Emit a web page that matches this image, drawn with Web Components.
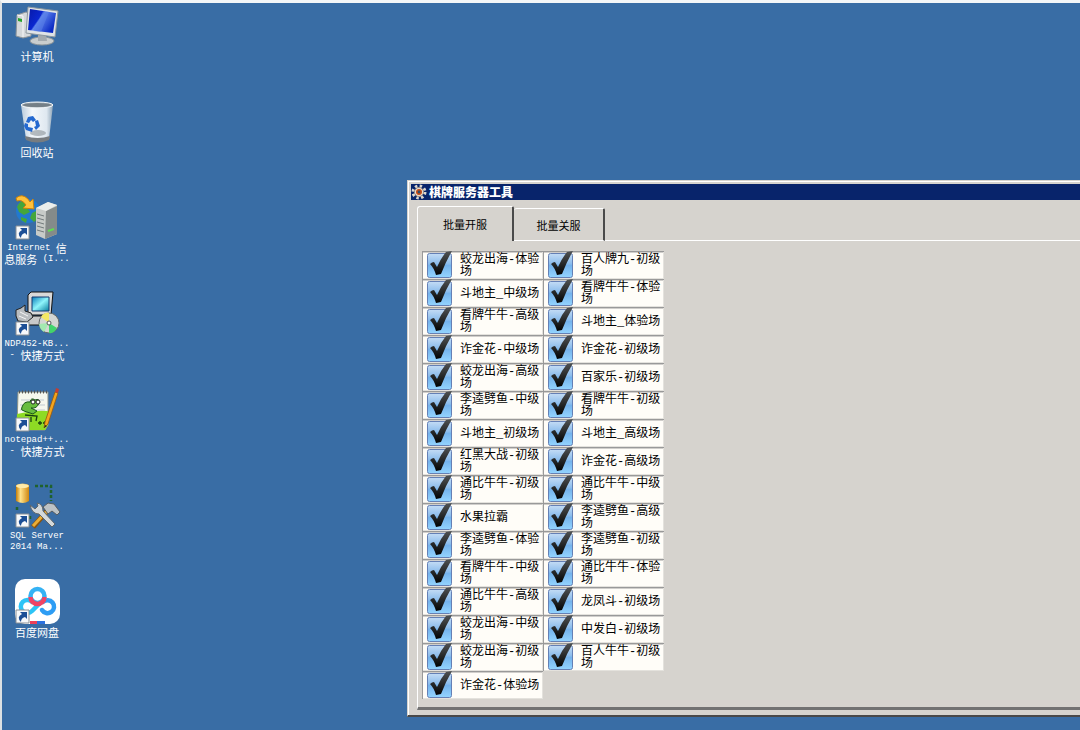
<!DOCTYPE html>
<html lang="zh-CN">
<head>
<meta charset="utf-8">
<title>棋牌服务器工具</title>
<style>
  body { margin: 0; font: 11px/11px "Noto Sans CJK SC", sans-serif; }
</style>
</head>
<body>
<desk-top>
  <desk-icon slot="icons">
    <svg slot="art" viewBox="0 0 48 48" aria-hidden="true">
      <defs><linearGradient id="scr" x2="1" y2=".6"><stop offset="0" stop-color="#0819a8"/><stop offset=".45" stop-color="#0a27d0"/><stop offset=".5" stop-color="#5f86ee"/><stop offset="1" stop-color="#0b2ac4"/></linearGradient></defs>
      <path d="M4 12l9-3 5 2v22l-8 2-7-2z" fill="#d5d8da" stroke="#8d9499"/><path d="M4 12l6 1v21" fill="none" stroke="#f8f8f8"/><path d="M5 15l4 1v3l-4-1z" fill="#27a32c"/>
      <ellipse cx="29" cy="38" rx="12" ry="4" fill="#c9cdce" stroke="#8c9498"/><path d="M25 31h8l1 7h-9z" fill="#a3aaaf"/>
      <path d="M15 4l30 4-3 26-29-4z" fill="#dfe3e6" stroke="#8d989f"/><path d="M17 6l26 4-3 20-25-3z" fill="url(#scr)"/><path d="M30 8l6 1-8 20-7-1z" fill="#5b82e8" opacity=".55"/>
    </svg>
    计算机
  </desk-icon>
  <desk-icon slot="icons">
    <svg slot="art" viewBox="0 0 48 48" aria-hidden="true">
      <defs><linearGradient id="bin"><stop offset="0" stop-color="#b9cbdc"/><stop offset=".35" stop-color="#f4f8fb"/><stop offset=".8" stop-color="#dfe8f0"/><stop offset="1" stop-color="#8fa5b8"/></linearGradient></defs>
      <path d="M8 6l5 34q11 5 23 0l4-34z" fill="url(#bin)"/><path d="M12 37l1 4q11 5 23 0l1-4q-12 4-25 0z" fill="#777c80"/>
      <ellipse cx="25" cy="34" rx="8" ry="3" fill="#8b9298" opacity=".6"/>
      <ellipse cx="24" cy="6" rx="16" ry="3" fill="#aab5bd" stroke="#eef2f5"/><ellipse cx="24" cy="6" rx="14" ry="2" fill="#747f87"/>
      <path d="M15 18l5-1 3 4-3 2-2-2-2 3-3-1zM22 22l3-1 2 6-4 4-2-3 2-1zM12 24l3 1v3l5 1-1 4-6-2-2-4z" fill="#2469d0"/>
    </svg>
    回收站
  </desk-icon>
  <desk-icon slot="icons" shortcut>
    <svg slot="art" viewBox="0 0 48 48" aria-hidden="true">
      <circle cx="15" cy="16" r="12" fill="#2279cf"/><path d="M4 12q3-8 11-7l4 4-5 4 3 4-6 3-5-3zM19 18l6-3 1 8-5 4-4-4zM8 22l6 2-1 4-5-3z" fill="#45a63b"/>
      <path d="M23 13l12-6 9 3v29l-12 5-9-4z" fill="#c7cbc8"/><path d="M33 16l11-5v28l-12 5z" fill="#858b8a"/><path d="M23 13l12-6 9 3-11 6z" fill="#eceeeb"/>
      <path d="M24 19l7 2M24 23l7 2M24 27l7 2M24 31l7 2M24 35l7 2" stroke="#737b7c"/><path d="M35 36l6-2" stroke="#62dc52" stroke-width="2"/>
      <path d="M3 3q6-5 12 1l2 3 3-3 1 10-11-1 3-3q-4-6-9-4z" fill="#ffc13a" stroke="#cc820b"/>
    </svg>
    <span lang="en">Internet </span>信<br>息服务<span lang="en"> (I...</span>
  </desk-icon>
  <desk-icon slot="icons" shortcut>
    <svg slot="art" viewBox="0 0 48 48" aria-hidden="true">
      <defs><linearGradient id="teal" x2="1" y2="1"><stop offset="0" stop-color="#087cba"/><stop offset=".5" stop-color="#8ff5fb"/><stop offset="1" stop-color="#087e9e"/></linearGradient></defs>
      <path d="M13 25h25l4 4v5H13z" fill="#c9c9c9" stroke="#111"/><path d="M18 1h22l-2 23H15V4z" fill="#d9d9d9" stroke="#111"/><path d="M19 6h17v14H19z" fill="url(#teal)" stroke="#143b71"/>
      <path d="M3 19l5-2 4-3v6l6 2 2 4-6 5-9-1-2-5z" fill="#b9bdc0" stroke="#222"/><path d="M7 21l8 4M6 25l7 3" stroke="#f5f5f5"/>
      <circle cx="36" cy="32" r="10" fill="#d4d6d2" stroke="#676b68"/><path d="M36 32l-8-6q3-5 8-4z" fill="#f3e865"/><path d="M36 32l8 5q-3 6-8 5z" fill="#42d46c"/><path d="M36 32l-10 1q1 6 5 8z" fill="#a3e9b0"/><circle cx="36" cy="32" r="2" fill="#fff" stroke="#555"/>
    </svg>
    <span lang="en">NDP452-KB...<br>- </span>快捷方式
  </desk-icon>
  <desk-icon slot="icons" shortcut>
    <svg slot="art" viewBox="0 0 48 48" aria-hidden="true">
      <path d="M5 5h30v33l-3 5H4z" fill="#f6f8ee" stroke="#8c9388"/><path d="M6 5h29" stroke="#555" stroke-width="3" stroke-dasharray="1 2"/>
      <path d="M4 27q16-4 31-3v14l-3 5H4z" fill="#8edb24"/><path d="M8 13h23M7 18h25M7 23h25" stroke="#c2cbd0"/>
      <path d="M9 20q2-6 8-5 1-5 5-2 5-2 4 3-2 6-8 5l6 3-4 3-9-3q-4-1-2-4z" fill="#68bd3f" stroke="#1c571c"/><circle cx="20" cy="15" r="2" fill="#fff" stroke="#222"/><circle cx="25" cy="15" r="2" fill="#fff" stroke="#222"/>
      <path d="M12 28l12 1-1 5M18 30v5M25 36h4m-2-2v4m3-2h4m-2-2v4" fill="none" stroke="#173f10" stroke-width="1.3"/>
      <path d="M42 5l3 1-10 31-4 4 1-6z" fill="#f3a51e" stroke="#9a590b" stroke-width=".8"/><path d="M42 5l1-4 3 1-1 4z" fill="#c53d30"/><path d="M31 41l1-3 2 1z" fill="#222"/>
    </svg>
    <span lang="en">notepad++...<br>- </span>快捷方式
  </desk-icon>
  <desk-icon slot="icons" shortcut>
    <svg slot="art" viewBox="0 0 48 48" aria-hidden="true">
      <defs><linearGradient id="gold"><stop offset="0" stop-color="#c47d08"/><stop offset=".35" stop-color="#ffe28a"/><stop offset="1" stop-color="#cf8610"/></linearGradient></defs>
      <path d="M3 2q7-3 13 0v16q-6 4-13 0z" fill="url(#gold)"/><ellipse cx="9.500" cy="3" rx="6.500" ry="2" fill="#ffeaa8"/>
      <path d="M22 3h16v15M4 24v5M17 33v4" fill="none" stroke="#20622d" stroke-width="2.500" stroke-dasharray="3 2"/>
      <path d="M35 27L20 44" stroke="#8c5208" stroke-width="5"/><path d="M35 27L20 43" stroke="#eaad37" stroke-width="3"/>
      <path d="M30 24l5-4 6 1 6 8-3 3-5-4-4 3z" fill="#bcc2c5" stroke="#555b60"/>
      <path d="M17 22l5 4 3-3-1-3q6 1 6 8l12 13-3 3-13-13q-7 0-9-9z" fill="#d5d9da" stroke="#60676b"/>
    </svg>
    <span lang="en">SQL Server<br>2014 Ma...</span>
  </desk-icon>
  <desk-icon slot="icons" shortcut>
    <svg slot="art" viewBox="0 0 48 48" aria-hidden="true">
      <rect x="2" width="45" height="45" rx="10" fill="#fff"/>
      <g fill="none" stroke-width="4.500" stroke-linecap="round"><path d="M19 23a6.500 6.500 0 1 0 0 9l7-7" stroke="#2dc4f6"/><path d="M30 23a6.500 6.500 0 1 1-1 8" stroke="#2e9df4"/><circle cx="24.500" cy="17" r="7" stroke="#35b2f4"/><path d="M17.500 18a7 7 0 0 0 14 0" stroke="#f04465" stroke-linecap="butt"/></g>
      <path d="M17 42h7v3h-7z" fill="#ed4059"/><path d="M24 42h8v3h-8z" fill="#2c72df"/>
    </svg>
    百度网盘
  </desk-icon>
  <tool-window slot="windows" heading="棋牌服务器工具">
    <svg slot="icon" viewBox="0 0 16 16" width="16" height="16" aria-hidden="true">
      <circle cx="8" cy="8" r="6" fill="none" stroke="#ddd7cf" stroke-width="3" stroke-dasharray="2.400 2.300"/><circle cx="8" cy="8" r="4.500" fill="#efe5d9" stroke="#9b8e84"/><circle cx="8" cy="8" r="3" fill="#c84b16"/><circle cx="8" cy="8" r="1.400" fill="#354b64"/>
    </svg>
    <tab-strip></tab-strip>
    <server-list></server-list>
  </tool-window>
</desk-top>

<script>
const define = (name, html, setup) => {
  const template = document.createElement('template');
  template.innerHTML = html;
  customElements.define(name, class extends HTMLElement {
    constructor() {
      super();
      this.attachShadow({ mode: 'open' }).append(template.content.cloneNode(true));
    }
    connectedCallback() { if (setup) setup(this, this.shadowRoot); }
  });
};

define('desk-top', `
  <style>
    :host { display: block; position: relative; box-sizing: border-box; min-height: 100vh; overflow: hidden;
      background: #396da5; border-top: 3px solid #f4f6f8; border-left: 2px solid #dde1e3; }
    nav { display: grid; grid-auto-rows: 96px; width: 70px; }
    .windows { position: absolute; left: 405px; right: -6px; top: 177px; }
  </style>
  <nav aria-label="桌面"><slot name="icons"></slot></nav>
  <div class="windows"><slot name="windows"></slot></div>`);

define('desk-icon', `
  <style>
    :host { display: block; color: #fff; }
    a { display: flex; flex-direction: column; align-items: center; color: inherit; text-decoration: none; text-align: center; }
    .art { display: grid; width: 48px; height: 48px; }
    .art > *, ::slotted(svg) { grid-area: 1 / 1; width: 48px; height: 48px; }
    .arrow { display: none; z-index: 1; }
    :host([shortcut]) .arrow { display: block; }
    .text { white-space: nowrap; }
    ::slotted(span) { font: 9px/11px "Liberation Mono", monospace; white-space: pre; vertical-align: top; }
  </style>
  <a href="#">
    <span class="art"><slot name="art"></slot>
      <svg class="arrow" viewBox="0 0 48 48" aria-hidden="true"><path d="M3 31h13v13H3z" fill="#f7f9fb" stroke="#8a8f94"/><path d="M7 33h7v7l-2-2q-4 1-4 5-5-5 1-8z" fill="#1d4f96"/></svg>
    </span>
    <span class="text"><slot></slot></span>
  </a>`);

define('tool-window', `
  <style>
    :host { display: block; background: #d6d3ce; border: 1px solid #d6d3ce; border-bottom: 2px solid #494949;
      box-shadow: inset 1px 1px #fff; padding: 3px; }
    header { display: flex; align-items: center; gap: 2px; height: 16px; background: #08246b; color: #fff; }
    h1 { margin: 0; font-size: 12px; line-height: 16px; font-weight: 900; }
    main { padding: 6px 0 2px 6px; }
  </style>
  <header><slot name="icon"></slot><h1></h1></header>
  <main><slot></slot></main>`,
  (host, root) => { root.querySelector('h1').textContent = host.getAttribute('heading'); });

define('tab-strip', `
  <style>
    :host { display: flex; align-items: flex-end; }
    button { box-sizing: border-box; width: 91px; height: 33px; margin: 0; padding: 2px 0 0; font: inherit; color: #000;
      background: #d6d3ce; border: 0 solid; border-color: #fff #4a4a4a #fff #fff; border-width: 1px 2px 1px 0; border-radius: 3px 2px 0 0; }
    button[aria-selected=true] { width: 97px; height: 35px; padding: 0; border-width: 1px 2px 0 1px; }
    i { flex: 1; border-bottom: 1px solid #fff; }
  </style>
  <button role="tab" aria-selected="true">批量开服</button><button role="tab" aria-selected="false">批量关服</button><i></i>`);

define('server-list', `
  <style>
    :host { display: grid; grid-template-columns: 121px 121px; grid-auto-rows: 28px; padding: 10px 0 8px 4px;
      border-left: 1px solid #fff; border-bottom: 3px solid #727272; }
  </style>`,
  (host, root) => {
    const names = [
      '蛟龙出海-体验场', '百人牌九-初级场', '斗地主_中级场', '看牌牛牛-体验场', '看牌牛牛-高级场', '斗地主_体验场',
      '诈金花-中级场', '诈金花-初级场', '蛟龙出海-高级场', '百家乐-初级场', '李逵劈鱼-中级场', '看牌牛牛-初级场',
      '斗地主_初级场', '斗地主_高级场', '红黑大战-初级场', '诈金花-高级场', '通比牛牛-初级场', '通比牛牛-中级场',
      '水果拉霸', '李逵劈鱼-高级场', '李逵劈鱼-体验场', '李逵劈鱼-初级场', '看牌牛牛-中级场', '通比牛牛-体验场',
      '通比牛牛-高级场', '龙凤斗-初级场', '蛟龙出海-中级场', '中发白-初级场', '蛟龙出海-初级场', '百人牛牛-初级场',
      '诈金花-体验场'];
    for (const name of names) {
      const item = document.createElement('server-item');
      item.textContent = name;
      root.append(item);
    }
  });

define('server-item', `
  <style>
    :host { display: block; }
    label { box-sizing: border-box; display: grid; grid-template-columns: 26px 80px; gap: 7px; align-items: center; height: 28px;
      padding-left: 4px; background: #fffdf8; border: 1px solid #999; border-width: 1px 0 0 1px;
      box-shadow: inset -1px -1px #e4e2dd, inset 0 1px #d0cecb; color: #000; font: 12px/12px "Liberation Mono", "Noto Sans CJK SC", sans-serif; }
    .box { display: grid; width: 26px; height: 27px; }
    .box > * { grid-area: 1 / 1; width: 26px; height: 27px; margin: 0; }
    input { appearance: none; }
    svg { pointer-events: none; overflow: visible; }
    input:not(:checked) + svg .tick { display: none; }
    .name { word-break: break-all; padding-top: 1px; }
  </style>
  <label>
    <span class="box"><input type="checkbox" checked>
      <svg viewBox="0 0 26 27" aria-hidden="true">
        <defs><linearGradient id="blue" x2="0" y2="1"><stop offset="0" stop-color="#c4dcf5"/><stop offset=".42" stop-color="#8dbdec"/><stop offset=".5" stop-color="#75b3ec"/><stop offset="1" stop-color="#93d4ff"/></linearGradient>
        <linearGradient id="ink" x2="0" y2="1"><stop offset="0" stop-color="#505355"/><stop offset="1" stop-color="#020303"/></linearGradient></defs>
        <rect x=".5" y="1.500" width="24" height="24" rx="2" fill="url(#blue)" stroke="#6580b5"/>
        <path class="tick" d="M3 12Q5 10 7 10L10 15Q14 6 19 0L25-1Q19 9 14 22L9 23Q7 16 3 12z" fill="url(#ink)"/>
      </svg>
    </span>
    <span class="name"><slot></slot></span>
  </label>`);
</script>
</body>
</html>
